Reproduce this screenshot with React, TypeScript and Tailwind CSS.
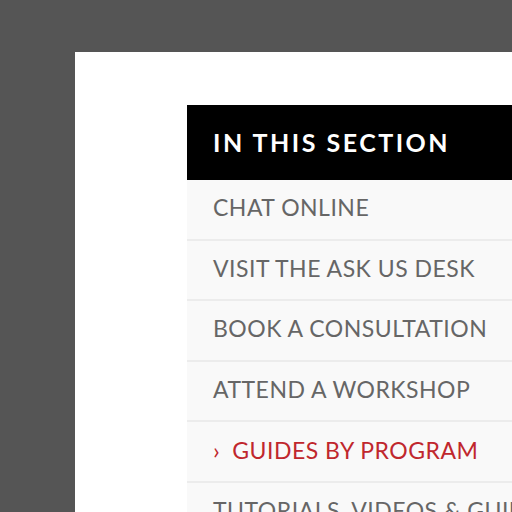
import React from "react";

const items = [
  { label: "CHAT ONLINE" },
  { label: "VISIT THE ASK US DESK" },
  { label: "BOOK A CONSULTATION" },
  { label: "ATTEND A WORKSHOP" },
  { label: "GUIDES BY PROGRAM", active: true },
  { label: "TUTORIALS, VIDEOS & GUIDES" },
];

export default function App() {
  return (
    <div className="w-[512px] h-[512px] overflow-hidden bg-[#555555] pt-[52px] pl-[75px]" style={{ fontFamily: "Lato, 'Open Sans', sans-serif" }}>
      <div className="w-[600px] h-[600px] bg-white pt-[53px] pl-[112px]">
        <div className="w-[400px]">
          <div className="h-[75px] bg-black flex items-center pl-[26px]">
            <span className="text-white text-[25px] font-bold tracking-[2.5px] leading-none">IN THIS SECTION</span>
          </div>
          {items.map((it) => (
            <div key={it.label} className="h-[60.6px] bg-[#f9f9f9] border-b-2 border-[#ececec] flex items-center pl-[26px] pb-[3px]">
              <span className={`flex items-center text-[23px] tracking-[0.5px] leading-none ${it.active ? "text-[#c0272d] tracking-[0.2px]" : "text-[#666666]"}`}>
                {it.active ? <span className="mr-[12px] text-[24px]">›</span> : null}
                {it.label}
              </span>
            </div>
          ))}
        </div>
      </div>
    </div>
  );
}
